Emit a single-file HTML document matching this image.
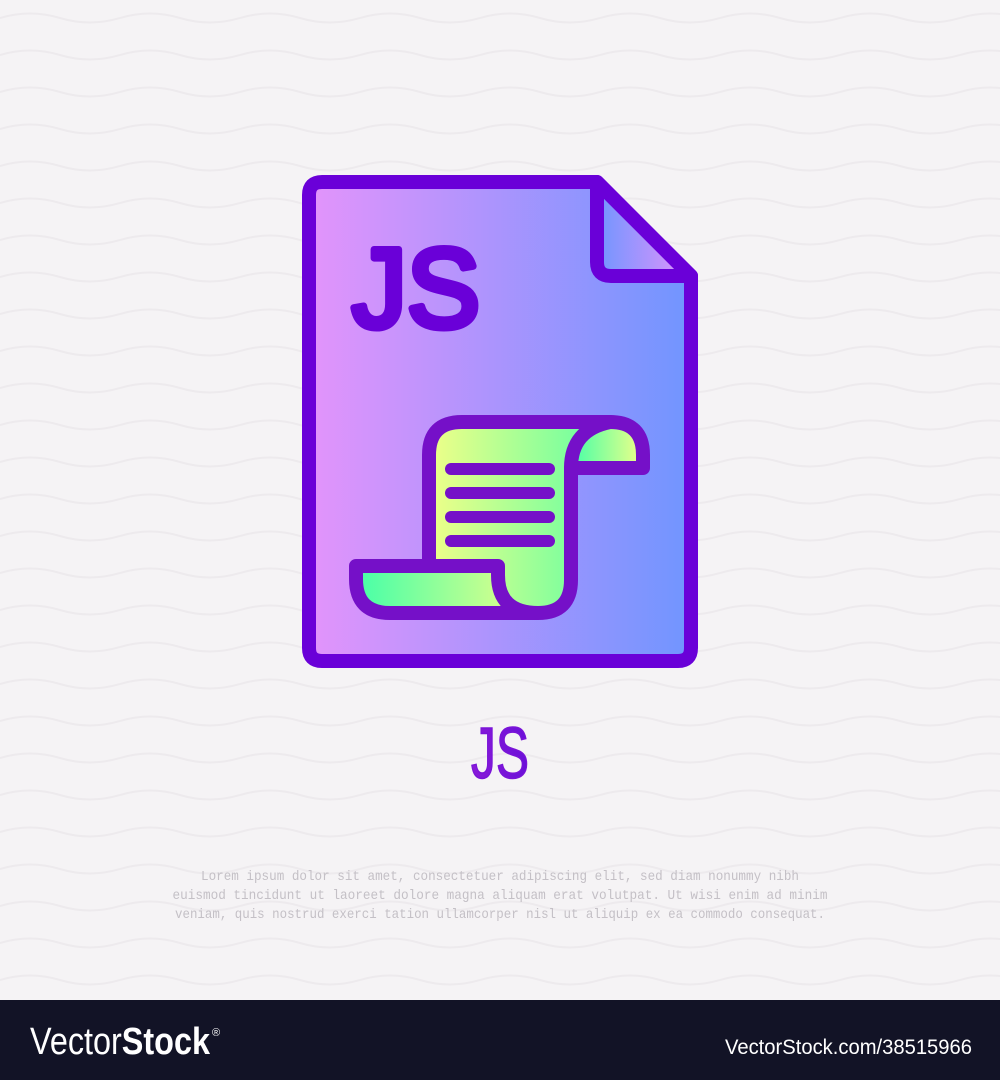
<!DOCTYPE html>
<html><head><meta charset="utf-8"><style>
html,body{margin:0;padding:0;width:1000px;height:1080px;overflow:hidden;background:#f5f3f5;}
svg{display:block;}
</style></head><body>
<svg width="1000" height="1080" viewBox="0 0 1000 1080" xmlns="http://www.w3.org/2000/svg">
<defs>
<pattern id="wave" x="0" y="0" width="120" height="37" patternUnits="userSpaceOnUse">
<path d="M0,18 Q30,9 60,18 T120,18" fill="none" stroke="#edeaed" stroke-width="2"/>
</pattern>
<linearGradient id="doc" x1="0" x2="1"><stop offset="0" stop-color="#e394fb"/><stop offset="1" stop-color="#7095ff"/></linearGradient>
<linearGradient id="fold" x1="0" x2="1"><stop offset="0" stop-color="#7095ff"/><stop offset="1" stop-color="#e394fb"/></linearGradient>
<linearGradient id="paper" x1="0" x2="1"><stop offset="0" stop-color="#f0ff88"/><stop offset="1" stop-color="#45ffa8"/></linearGradient>
<linearGradient id="tab" x1="0" x2="1"><stop offset="0" stop-color="#45ffa8"/><stop offset="1" stop-color="#f0ff88"/></linearGradient>
<linearGradient id="lbl" x1="0" x2="1"><stop offset="0" stop-color="#8a1ad8"/><stop offset="1" stop-color="#6a10d8"/></linearGradient>
</defs>
<rect width="1000" height="1000" fill="#f5f3f5"/>
<rect width="1000" height="1000" fill="url(#wave)"/>
<path d="M309,195 Q309,182 322,182 H597 L691,276 V648 Q691,661 678,661 H322 Q309,661 309,648 Z" fill="url(#doc)" stroke="#6a00d8" stroke-width="14" stroke-linejoin="round"/>
<path d="M597,182 V262 Q597,276 611,276 H691 Z" fill="url(#fold)" stroke="#6a00d8" stroke-width="14" stroke-linejoin="round"/>
<text x="352" y="327" font-family="Liberation Sans, sans-serif" font-size="112" fill="#6a00d8" stroke="#6a00d8" stroke-width="7" stroke-linejoin="round" textLength="128" lengthAdjust="spacingAndGlyphs">JS</text>
<path d="M429,566 V455 Q429,422 462,422 H610 Q643,422 643,455 V468 H571 V580 Q571,613 538,613 Q498,613 498,575 V566 Z" fill="url(#paper)"/>
<path d="M356,566 H498 V575 Q498,613 538,613 H390 Q356,613 356,579 Z" fill="url(#tab)"/>
<path d="M610,422 Q643,422 643,455 V468 H571 Q571,430 610,422 Z" fill="url(#tab)"/>
<g fill="none" stroke="#7510c8" stroke-width="14" stroke-linejoin="round" stroke-linecap="round">
<path d="M429,566 V455 Q429,422 462,422 H610 Q643,422 643,455 V468 H571 V580 Q571,613 538,613 H390 Q356,613 356,579 V566 H498 V575 Q498,613 538,613"/>
<path d="M571,468 Q571,430 610,422"/>
</g>
<g stroke="#7510c8" stroke-width="12" stroke-linecap="round">
<line x1="451" y1="469" x2="549" y2="469"/>
<line x1="451" y1="493" x2="549" y2="493"/>
<line x1="451" y1="517" x2="549" y2="517"/>
<line x1="451" y1="541" x2="549" y2="541"/>
</g>
<text x="500" y="778" text-anchor="middle" font-family="Liberation Sans, sans-serif" font-size="72" fill="url(#lbl)" stroke="#7a14d8" stroke-width="1.5" textLength="58" lengthAdjust="spacingAndGlyphs">JS</text>
<g font-family="Liberation Mono, monospace" font-size="14" fill="#c4c0c6" text-anchor="middle">
<text x="500" y="880" textLength="598" lengthAdjust="spacingAndGlyphs">Lorem ipsum dolor sit amet, consectetuer adipiscing elit, sed diam nonummy nibh</text>
<text x="500" y="899" textLength="655" lengthAdjust="spacingAndGlyphs">euismod tincidunt ut laoreet dolore magna aliquam erat volutpat. Ut wisi enim ad minim</text>
<text x="500" y="918" textLength="650" lengthAdjust="spacingAndGlyphs">veniam, quis nostrud exerci tation ullamcorper nisl ut aliquip ex ea commodo consequat.</text>
</g>
<rect x="0" y="1000" width="1000" height="80" fill="#121326"/>
<text x="30" y="1054" font-family="Liberation Sans, sans-serif" font-size="38" fill="#fff" textLength="180" lengthAdjust="spacingAndGlyphs"><tspan font-weight="normal">Vector</tspan><tspan font-weight="bold">Stock</tspan></text>
<text x="212" y="1036" font-family="Liberation Sans, sans-serif" font-size="11" fill="#fff">®</text>
<text x="972" y="1054" text-anchor="end" font-family="Liberation Sans, sans-serif" font-size="21" fill="#fff" textLength="247" lengthAdjust="spacingAndGlyphs">VectorStock.com/38515966</text>
</svg>
</body></html>
